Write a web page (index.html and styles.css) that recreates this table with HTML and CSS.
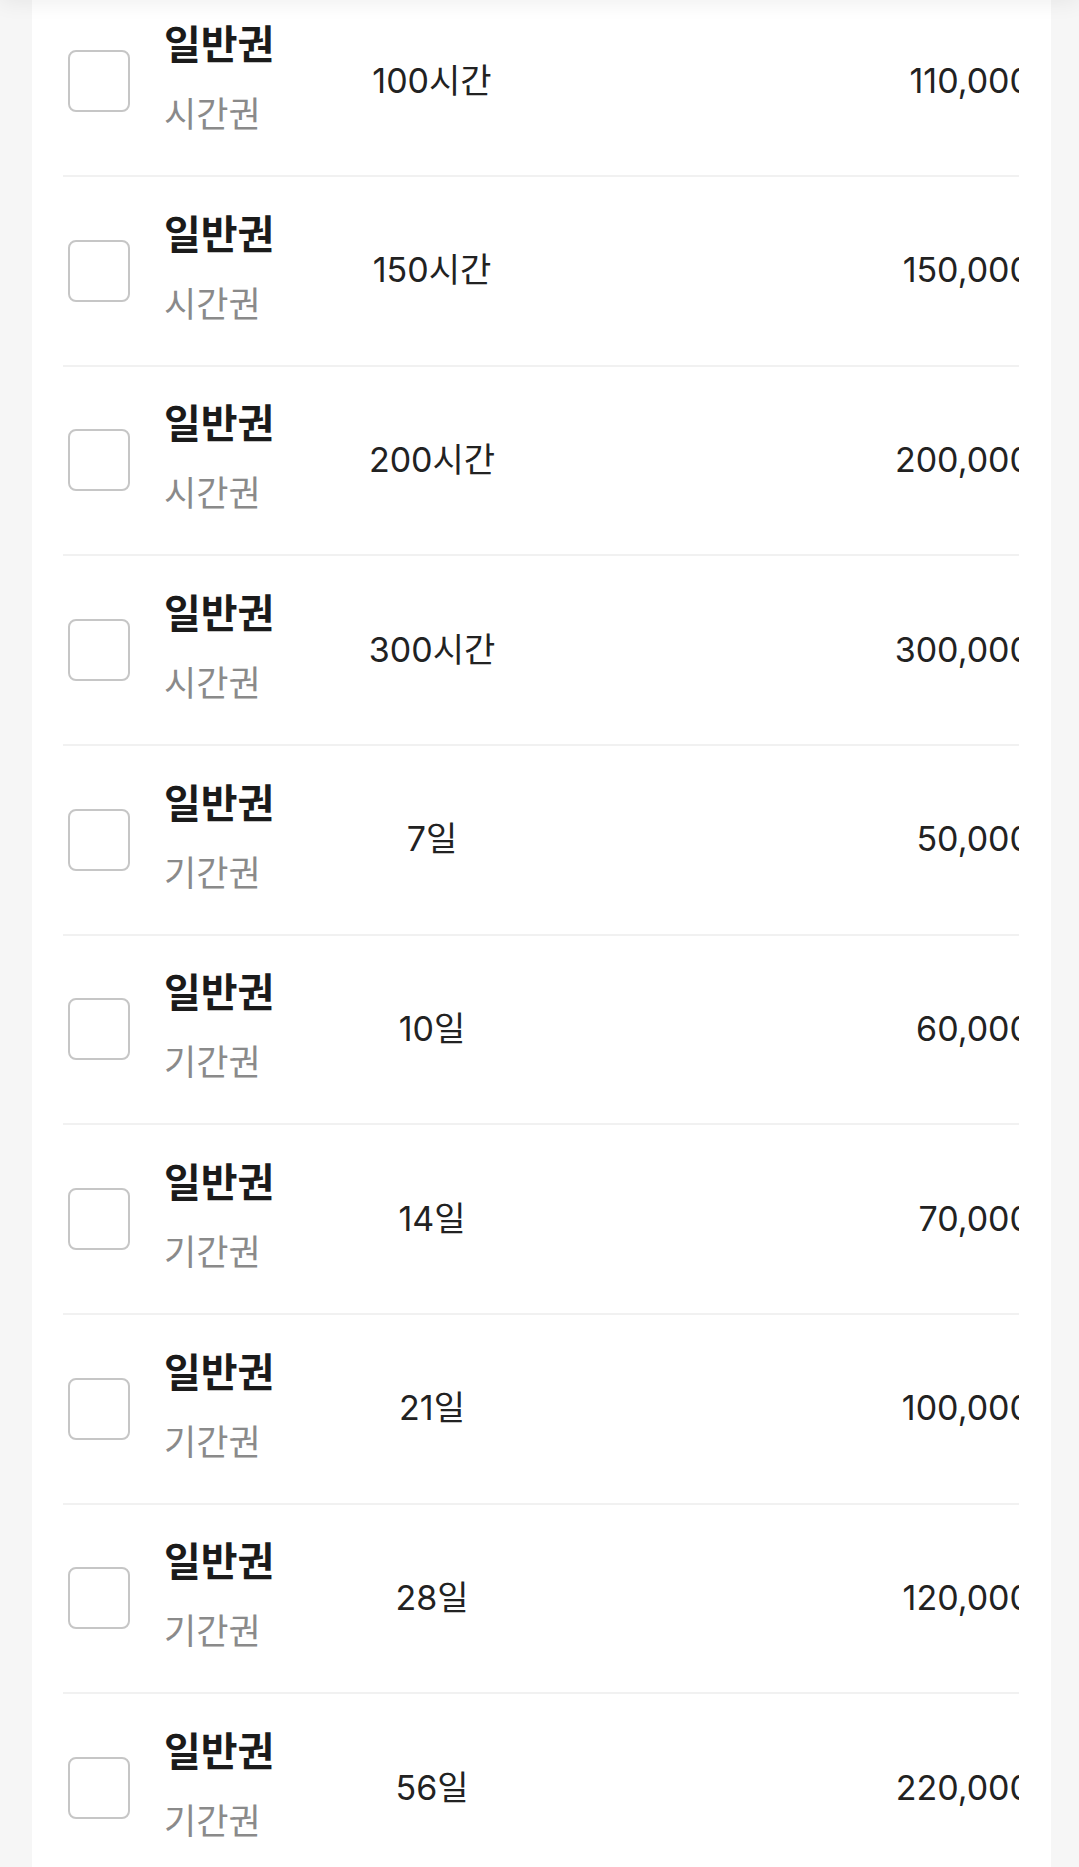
FILE: index.html
```html
<!DOCTYPE html>
<html lang="ko">
<head>
<meta charset="utf-8">
<link rel="stylesheet" href="styles.css">
</head>
<body>
<div class="topbar"></div>
<div class="card">
  <ul class="list">
    <li class="row"><span class="check"></span><div class="name"><div class="title">일반권</div><div class="sub">시간권</div></div><div class="amount">100시간</div><div class="price">110,000</div></li>
    <li class="row"><span class="check"></span><div class="name"><div class="title">일반권</div><div class="sub">시간권</div></div><div class="amount">150시간</div><div class="price">150,000</div></li>
    <li class="row"><span class="check"></span><div class="name"><div class="title">일반권</div><div class="sub">시간권</div></div><div class="amount">200시간</div><div class="price">200,000</div></li>
    <li class="row"><span class="check"></span><div class="name"><div class="title">일반권</div><div class="sub">시간권</div></div><div class="amount">300시간</div><div class="price">300,000</div></li>
    <li class="row"><span class="check"></span><div class="name"><div class="title">일반권</div><div class="sub">기간권</div></div><div class="amount">7일</div><div class="price">50,000</div></li>
    <li class="row"><span class="check"></span><div class="name"><div class="title">일반권</div><div class="sub">기간권</div></div><div class="amount">10일</div><div class="price">60,000</div></li>
    <li class="row"><span class="check"></span><div class="name"><div class="title">일반권</div><div class="sub">기간권</div></div><div class="amount">14일</div><div class="price">70,000</div></li>
    <li class="row"><span class="check"></span><div class="name"><div class="title">일반권</div><div class="sub">기간권</div></div><div class="amount">21일</div><div class="price">100,000</div></li>
    <li class="row"><span class="check"></span><div class="name"><div class="title">일반권</div><div class="sub">기간권</div></div><div class="amount">28일</div><div class="price">120,000</div></li>
    <li class="row"><span class="check"></span><div class="name"><div class="title">일반권</div><div class="sub">기간권</div></div><div class="amount">56일</div><div class="price">220,000</div></li>
  </ul>
</div>
</body>
</html>
```

FILE: styles.css
```css
html, body {
  margin: 0;
  padding: 0;
  background: #f6f6f6;
  font-family: "Noto Sans CJK KR", "Noto Sans", sans-serif;
  overflow: hidden;
}
.topbar {
  position: fixed;
  top: -40px;
  left: 0;
  right: 0;
  height: 40px;
  box-shadow: 0 2px 22px rgba(0, 0, 0, 0.07);
  z-index: 5;
}
.card {
  margin-left: 32px;
  width: 1019px;
  min-height: 1900px;
  background: #fff;
  padding: 0 32px 0 31px;
  box-sizing: border-box;
}
.list {
  list-style: none;
  margin: -12.67px 0 0 0;
  padding: 0;
}
.row {
  display: flex;
  align-items: center;
  height: 189.67px;
  box-sizing: border-box;
  border-bottom: 2px solid #f1f1f1;
  overflow: hidden;
}
.check {
  flex: none;
  width: 62px;
  height: 62px;
  box-sizing: border-box;
  margin-left: 5px;
  border: 2px solid #c6c6c6;
  border-radius: 8px;
}
.name {
  flex: none;
  width: 170px;
  margin-left: 34px;
  padding-bottom: 10px;
}
.title {
  font-size: 40px;
  font-weight: 700;
  line-height: 50px;
  color: #1b1b1b;
}
.sub {
  margin-top: 22px;
  font-size: 35px;
  line-height: 46px;
  color: #8a8a8a;
}
.amount,
.price {
  font-family: Inter, "Noto Sans CJK KR", sans-serif;
  font-size: 34px;
  line-height: 48px;
  color: #222;
  padding-bottom: 1px;
}
.amount {
  flex: none;
  width: 196px;
  text-align: center;
}
.price {
  flex: 1;
  margin-right: -12px;
  text-align: right;
  white-space: nowrap;
}
```
